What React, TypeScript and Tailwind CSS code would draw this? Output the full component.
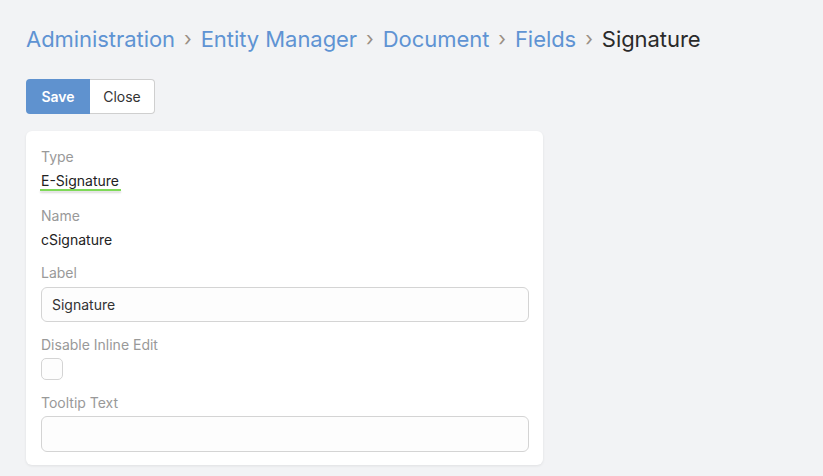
import { Fragment } from 'react';

const crumbs = ['Administration', 'Entity Manager', 'Document', 'Fields'];

function Label({ children, tight }: { children: string; tight?: boolean }) {
  return (
    <div className={tight ? 'text-[14px] leading-[20px] text-[#999] mb-[3px]' : 'text-[14px] leading-[20px] text-[#999] mb-[4px]'}>
      {children}
    </div>
  );
}

export default function App() {
  return (
    <div className="min-h-[476px] bg-[#f2f3f5] px-[26px] pt-[23px] pb-[10px]" style={{ fontFamily: 'Inter, "Noto Sans", sans-serif' }}>
      {/* Breadcrumb */}
      <div className="flex items-center text-[22px] leading-[32px] tracking-[-0.05px]">
        {crumbs.map((c) => (
          <Fragment key={c}>
            <span className="text-[#5f93d3]">{c}</span>
            <span className="mx-[9px] text-[#9a8f84] text-[20px]">›</span>
          </Fragment>
        ))}
        <span className="text-[#2a2a2a]">Signature</span>
      </div>

      {/* Buttons */}
      <div className="flex mt-[24px]">
        <button className="h-[35px] w-[64px] rounded-l-[4px] bg-[#5f92cf] text-white text-[14px] font-semibold">Save</button>
        <button className="h-[35px] w-[65px] rounded-r-[4px] bg-white border border-l-0 border-[#cfcfcf] text-[#333] text-[14px]">Close</button>
      </div>

      {/* Card */}
      <div className="mt-[17px] w-[517px] bg-white rounded-[6px] shadow-[0_1px_3px_rgba(0,0,0,0.08)] pl-[15px] pr-[14px] pt-[16px] pb-[13px] flex flex-col gap-[13px]">
        <div className="pb-[2px]">
          <Label>Type</Label>
          <div className="flex">
            <div className="relative text-[14px] leading-[20px] text-[#222]">
              E-Signature
              <div className="absolute left-[-1px] right-[-2px] bottom-0 h-[2px] bg-[#7ed957] shadow-[0_2px_2px_rgba(0,0,0,0.15)]" />
            </div>
          </div>
        </div>

        <div>
          <Label>Name</Label>
          <div className="text-[14px] leading-[20px] text-[#222]">cSignature</div>
        </div>

        <div>
          <Label>Label</Label>
          <div className="h-[35px] rounded-[6px] border border-[#d4d4d4] bg-[#fdfdfd] flex items-center px-[10px] text-[14px] text-[#333]">Signature</div>
        </div>

        <div>
          <Label tight>Disable Inline Edit</Label>
          <div className="w-[22px] h-[22px] rounded-[5px] border border-[#d4d4d4] bg-[#fdfdfd]" />
        </div>

        <div>
          <Label tight>Tooltip Text</Label>
          <div className="h-[36px] rounded-[6px] border border-[#d4d4d4] bg-[#fdfdfd]" />
        </div>
      </div>
    </div>
  );
}
